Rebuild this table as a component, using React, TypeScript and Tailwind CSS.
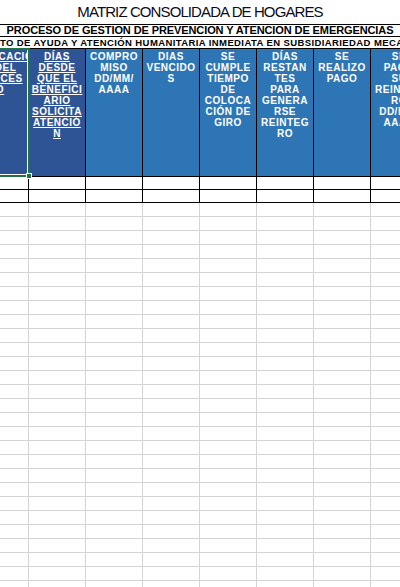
import React from "react";

const headers: { lines: string[]; dark?: boolean; underline?: boolean }[] = [
  { lines: ["RADICACIO", "N DEL", "PROCES", "O"], dark: true, underline: true },
  { lines: ["DÍAS", "DESDE", "QUE EL", "BENEFICI", "ARIO", "SOLICITA", "ATENCIÓ", "N"], dark: true, underline: true },
  { lines: ["COMPRO", "MISO", "DD/MM/", "AAAA"] },
  { lines: ["DIAS", "VENCIDO", "S"] },
  { lines: ["SE", "CUMPLE", "TIEMPO", "DE", "COLOCA", "CIÓN DE", "GIRO"] },
  { lines: ["DÍAS", "RESTAN", "TES", "PARA", "GENERA", "RSE", "REINTEG", "RO"] },
  { lines: ["SE", "REALIZO", "PAGO"] },
  { lines: ["SE", "PAGO", "SU", "REINTEG", "RO", "DD/MM/", "AAAA"] },
];

const cols = Array.from({ length: 8 });

export default function App() {
  return (
    <div className="relative w-[400px] h-[587px] overflow-hidden bg-white font-['Liberation_Sans',Arial,sans-serif] text-black">
      {/* title */}
      <div className="h-[25px] border-b border-black flex items-center justify-center pt-[1px]">
        <span className="text-[15px] tracking-[-0.9px] text-[#0c0c1c]">MATRIZ CONSOLIDADA DE HOGARES</span>
      </div>
      <div className="h-[12px] border-b border-black flex items-center justify-center">
        <span className="text-[11px] font-bold leading-none whitespace-nowrap tracking-[-0.1px]">
          PROCESO DE GESTION DE PREVENCION Y ATENCION DE EMERGENCIAS
        </span>
      </div>
      <div className="h-[12px] border-b border-black flex items-center overflow-hidden">
        <span className="text-[9.5px] font-bold leading-none whitespace-nowrap tracking-[0.4px]">
          TO DE AYUDA Y ATENCIÓN HUMANITARIA INMEDIATA EN SUBSIDIARIEDAD MECANISMO
        </span>
      </div>

      <div className="-ml-[28px] w-[456px]">
        {/* header */}
        <div className="flex h-[128px] border-b border-black">
          {headers.map((h, i) => (
            <div
              key={i}
              className={`w-[57px] shrink-0 border-r border-black pt-[2px] text-center text-white text-[10px] leading-[11px] font-bold tracking-[0.5px] ${
                h.dark ? "bg-[#2f5496]" : "bg-[#2e75b6]"
              }`}
            >
              {h.lines.map((l, j) => (
                <div key={j} className={`whitespace-nowrap ${h.underline ? "underline underline-offset-[1px]" : ""}`}>
                  {l}
                </div>
              ))}
            </div>
          ))}
        </div>

        {/* bordered data rows */}
        {[0, 1].map((r) => (
          <div key={r} className="flex h-[13px] border-b border-black">
            {cols.map((_, i) => (
              <div key={i} className="w-[57px] shrink-0 border-r border-black" />
            ))}
          </div>
        ))}

        {/* empty grid */}
        {Array.from({ length: 28 }).map((_, r) => (
          <div key={r} className="flex h-[14px] border-b border-[#d4d4d4]">
            {cols.map((_, i) => (
              <div key={i} className="w-[57px] shrink-0 border-r border-[#d4d4d4]" />
            ))}
          </div>
        ))}
      </div>

      {/* cell selection */}
      <div className="absolute left-[-10px] top-[48px] w-[40px] h-[129px] border-2 border-[#217346]">
        <div className="h-full w-full border-r border-b border-white" />
      </div>
      <div className="absolute left-[26px] top-[173px] w-[6px] h-[6px] bg-[#217346] border border-white" />
    </div>
  );
}
